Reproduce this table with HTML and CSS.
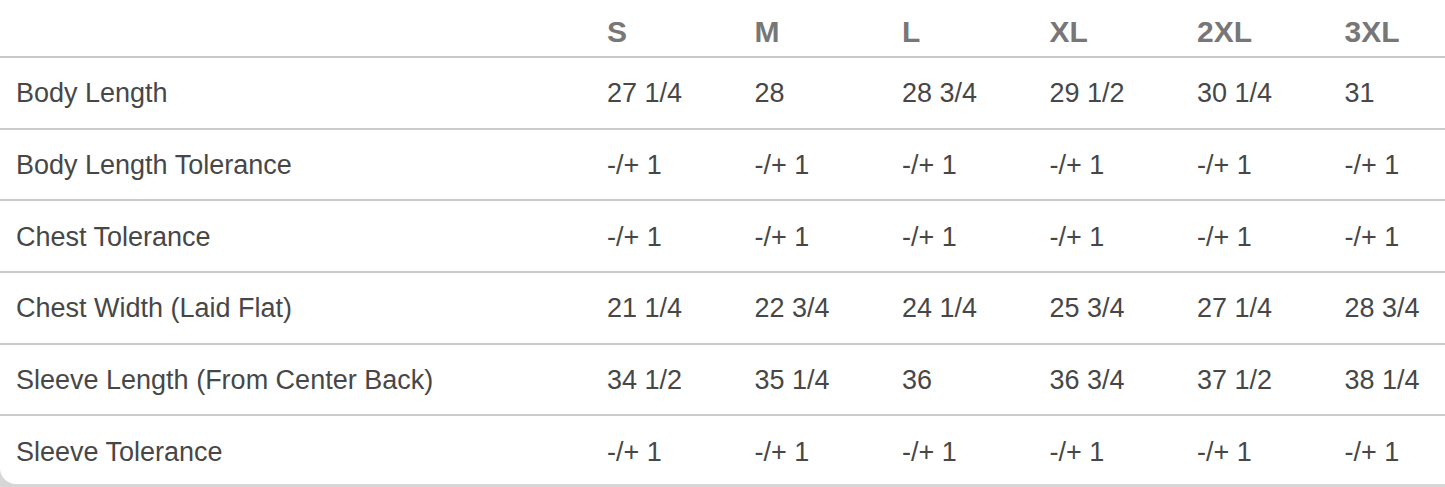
FILE: index.html
```html
<!DOCTYPE html>
<html lang="en">
<head>
<meta charset="utf-8">
<title>Size Chart</title>
<link rel="stylesheet" href="styles.css">
</head>
<body>
<div class="card">
  <table class="chart">
    <colgroup>
      <col class="c-label"><col class="c-size"><col class="c-size"><col class="c-size"><col class="c-size"><col class="c-size"><col class="c-size">
    </colgroup>
    <thead>
      <tr class="head">
        <th></th><th>S</th><th>M</th><th>L</th><th>XL</th><th>2XL</th><th>3XL</th>
      </tr>
    </thead>
    <tbody>
      <tr><td>Body Length</td><td>27 1/4</td><td>28</td><td>28 3/4</td><td>29 1/2</td><td>30 1/4</td><td>31</td></tr>
      <tr><td>Body Length Tolerance</td><td>-/+ 1</td><td>-/+ 1</td><td>-/+ 1</td><td>-/+ 1</td><td>-/+ 1</td><td>-/+ 1</td></tr>
      <tr><td>Chest Tolerance</td><td>-/+ 1</td><td>-/+ 1</td><td>-/+ 1</td><td>-/+ 1</td><td>-/+ 1</td><td>-/+ 1</td></tr>
      <tr><td>Chest Width (Laid Flat)</td><td>21 1/4</td><td>22 3/4</td><td>24 1/4</td><td>25 3/4</td><td>27 1/4</td><td>28 3/4</td></tr>
      <tr><td>Sleeve Length (From Center Back)</td><td>34 1/2</td><td>35 1/4</td><td>36</td><td>36 3/4</td><td>37 1/2</td><td>38 1/4</td></tr>
      <tr class="last"><td>Sleeve Tolerance</td><td>-/+ 1</td><td>-/+ 1</td><td>-/+ 1</td><td>-/+ 1</td><td>-/+ 1</td><td>-/+ 1</td></tr>
    </tbody>
  </table>
</div>
</body>
</html>
```
FILE: styles.css
```css
html, body {
  margin: 0;
  padding: 0;
  overflow: hidden;
  background: #d6d6d6;
}
body {
  font-family: "Liberation Sans", Arial, sans-serif;
  height: 487px;
}
.card {
  width: 1480px;
  height: 484px;
  background: #ffffff;
  border-bottom-left-radius: 16px;
  overflow: hidden;
}
.chart {
  width: 1480px;
  table-layout: fixed;
  border-collapse: collapse;
}
.c-label { width: 595px; }
.c-size { width: 147.5px; }
.chart th, .chart td {
  text-align: left;
  padding: 0 0 0 12px;
  vertical-align: middle;
}
.chart th:first-child, .chart td:first-child {
  padding-left: 16px;
}
.head th {
  height: 57px;
  font-size: 30px;
  font-weight: bold;
  color: #777777;
  border-bottom: 2px solid #c9c9c9;
  padding-top: 8px;
  box-sizing: border-box;
}
.chart td {
  height: 71.7px;
  box-sizing: border-box;
  padding-top: 2px;
  font-size: 27px;
  color: #474747;
  border-bottom: 2px solid #cbcbcb;
}
.chart tr.last td {
  border-bottom: none;
}
```
